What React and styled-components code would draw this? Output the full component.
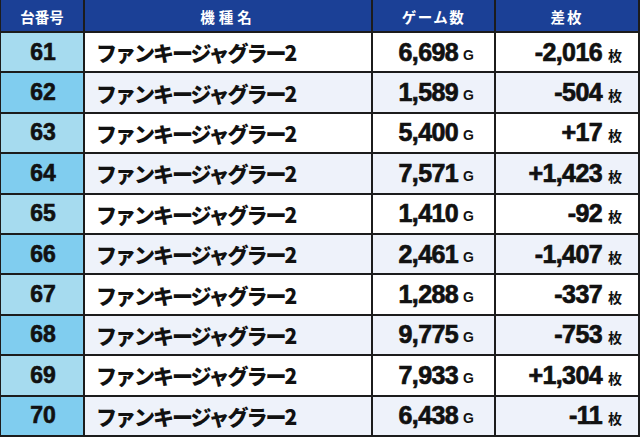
import React from "react";
import styled, { createGlobalStyle } from "styled-components";

const Global = createGlobalStyle`
  html, body { margin: 0; padding: 0; background: #fff; }
  body { font-family: "Liberation Sans", "Noto Sans CJK JP", sans-serif; }
`;

const rows = [
  [61, "6,698", "-2,016"],
  [62, "1,589", "-504"],
  [63, "5,400", "+17"],
  [64, "7,571", "+1,423"],
  [65, "1,410", "-92"],
  [66, "2,461", "-1,407"],
  [67, "1,288", "-337"],
  [68, "9,775", "-753"],
  [69, "7,933", "+1,304"],
  [70, "6,438", "-11"],
];

const Table = styled.div`
  display: grid;
  grid-template-columns: 82px 286px 121px 1fr;
  grid-template-rows: 31px repeat(10, 1fr);
  gap: 2px;
  width: 640px;
  height: 437px;
  box-sizing: border-box;
  padding: 0 2px 2px 1px;
  background: #1c1c1c;
`;

const Head = styled.div`
  background: #1b4096;
  color: #fff;
  display: flex;
  align-items: center;
  justify-content: center;
  font-family: "Noto Sans CJK JP", sans-serif;
  font-weight: 700;
  font-size: 14.5px;
  letter-spacing: ${(p) => p.$ls || "0px"};
  padding-top: 1px;
`;

const NoCell = styled.div`
  background: ${(p) => (p.$alt ? "#80cdef" : "#a6dbef")};
  display: flex;
  align-items: center;
  justify-content: center;
  font-family: "Liberation Sans", sans-serif;
  font-weight: 700;
  font-size: 23px;
  -webkit-text-stroke: 0.6px #111;
  color: #111;
  padding-left: 2px;
`;

const NameCell = styled.div`
  background: ${(p) => (p.$alt ? "#eef2fa" : "#ffffff")};
  display: flex;
  align-items: center;
  padding-left: 11px;
  font-family: "Noto Sans CJK JP", sans-serif;
  font-weight: 900;
  font-size: 21px;
  letter-spacing: -2px;
  color: #111;
`;

const NumCell = styled.div`
  background: ${(p) => (p.$alt ? "#eef2fa" : "#ffffff")};
  display: flex;
  align-items: center;
  justify-content: flex-end;
  padding-right: ${(p) => p.$pr};
  color: #111;
`;

const Value = styled.span`
  font-family: "Liberation Sans", sans-serif;
  font-weight: 700;
  font-size: 25px;
  letter-spacing: -0.6px;
  -webkit-text-stroke: 0.7px #111;
`;

const Unit = styled.span`
  font-family: ${(p) => p.$font};
  font-weight: 700;
  font-size: ${(p) => p.$fs};
  margin-left: ${(p) => p.$ml};
  padding-top: 5px;
`;

export default function App() {
  return (
    <>
      <Global />
      <Table>
        <Head>台番号</Head>
        <Head $ls="4px">機種名</Head>
        <Head $ls="1.5px">ゲーム数</Head>
        <Head $ls="2px">差枚</Head>
        {rows.map(([no, g, d], i) => {
          const alt = i % 2 === 1;
          return (
            <React.Fragment key={no}>
              <NoCell $alt={alt}>{no}</NoCell>
              <NameCell $alt={alt}>ファンキージャグラー2</NameCell>
              <NumCell $alt={alt} $pr="20px">
                <Value>{g}</Value>
                <Unit $font='"Liberation Sans", sans-serif' $fs="14px" $ml="5px">G</Unit>
              </NumCell>
              <NumCell $alt={alt} $pr="16px">
                <Value>{d}</Value>
                <Unit $font='"Noto Sans CJK JP", sans-serif' $fs="14px" $ml="6px">枚</Unit>
              </NumCell>
            </React.Fragment>
          );
        })}
      </Table>
    </>
  );
}
